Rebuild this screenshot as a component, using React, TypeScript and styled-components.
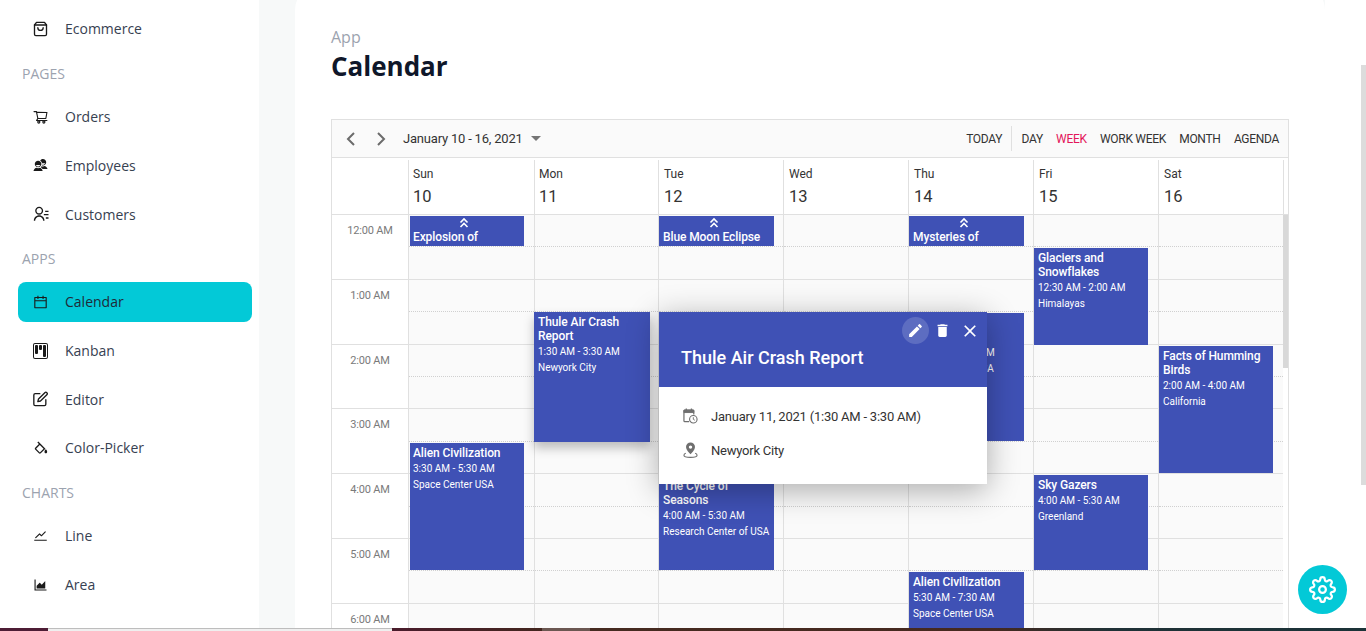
import * as React from "react"
import styled, { createGlobalStyle } from "styled-components"
import { FiShoppingBag, FiEdit, FiSettings } from "react-icons/fi"
import {
  AiOutlineShoppingCart,
  AiOutlineCalendar,
  AiOutlineStock,
  AiOutlineAreaChart,
} from "react-icons/ai"
import { IoMdContacts } from "react-icons/io"
import { RiContactsLine } from "react-icons/ri"
import { BsKanban } from "react-icons/bs"
import { BiColorFill } from "react-icons/bi"
import { MdEdit, MdDelete, MdClose } from "react-icons/md"

const INDIGO = "#3f51b5"
const LINE = "#e0e0e0"
const SLOT = 32.4

const GlobalStyle = createGlobalStyle`
  html, body {
    margin: 0;
    height: 100%;
    overflow: hidden;
    background: #fff;
  }
  * {
    box-sizing: border-box;
  }
`

const Shell = styled.div`
  display: flex;
  height: 100vh;
  overflow: hidden;
  font-family: "Open Sans", sans-serif;
`

const Sidebar = styled.aside`
  flex: 0 0 259px;
  padding: 8.4px 7px 0 18px;
  background: #fff;
`

const SectionTitle = styled.p`
  margin: 14.67px 0 12.67px 4px;
  height: 20px;
  font-size: 14px;
  line-height: 20px;
  color: #9ca3af;
`

const NavItem = styled.a<{ $active?: boolean }>`
  display: flex;
  align-items: center;
  gap: 16px;
  height: 40.67px;
  margin-bottom: 8px;
  padding-left: 14px;
  border-radius: 8px;
  font-size: 14px;
  color: ${(p) => (p.$active ? "#1f2937" : "#374151")};
  background: ${(p) => (p.$active ? "#03c9d7" : "transparent")};
  & svg {
    flex: 0 0 17px;
    width: 17px;
    height: 16px;
    color: #1a1a1a;
  }
`

const Main = styled.main`
  flex: 1;
  padding: 0 41px 0 36px;
  background: linear-gradient(to right, #f7f9f9 0, #f7f9f9 1066px, #fff 1066px);
`

const Card = styled.section`
  margin-top: -14px;
  padding: 39px 36px 0;
  height: calc(100vh + 14px);
  background: #fff;
  border-radius: 24px 24px 0 0;
  overflow: hidden;
`

const Breadcrumb = styled.p`
  margin: 0;
  height: 22px;
  font-size: 16px;
  line-height: 24px;
  color: #9ca3af;
`

const PageTitle = styled.h1`
  margin: 0 0 34px;
  height: 38px;
  font-size: 26px;
  line-height: 38px;
  font-weight: 700;
  color: #0f172a;
`

const Scheduler = styled.div`
  position: relative;
  height: 530px;
  border: 1px solid ${LINE};
  border-bottom: 0;
  font-family: Roboto, sans-serif;
  background: #fff;
`

const Toolbar = styled.div`
  display: flex;
  align-items: center;
  height: 38px;
  padding: 0 9px 0 11px;
  background: #fafafa;
  border-bottom: 1px solid ${LINE};
  font-size: 13px;
  color: #333;
`

const NavArrow = styled.button`
  display: flex;
  padding: 0;
  width: 16px;
  margin-right: 14px;
  border: 0;
  background: none;
  & svg {
    width: 16px;
    height: 18px;
    fill: none;
    stroke: #6b6b6b;
    stroke-width: 2;
  }
`

const DateRange = styled.span`
  font-size: 13px;
  letter-spacing: -0.2px;
`

const Caret = styled.i`
  margin-left: 8px;
  border-left: 5px solid transparent;
  border-right: 5px solid transparent;
  border-top: 5px solid #757575;
`

const ToolbarSpacer = styled.div`
  flex: 1;
`

const ViewButton = styled.span<{ $active?: boolean }>`
  margin-left: 13.3px;
  font-size: 12px;
  letter-spacing: -0.3px;
  color: ${(p) => (p.$active ? "#e3165b" : "#333")};
`

const ToolbarDivider = styled.i`
  width: 1px;
  height: 25px;
  margin: 0 -4px 0 9px;
  background: ${LINE};
`

const HeadRow = styled.div`
  display: grid;
  grid-template-columns: 76px 126px 124px repeat(5, 125px);
  height: 57px;
  padding-top: 2px;
  border-bottom: 1px solid ${LINE};
`

const HeadCell = styled.div`
  padding: 6px 0 0 5px;
  border-left: 1px solid ${LINE};
  color: #333;
  &:nth-child(-n + 3) {
    padding-left: 4px;
  }
  &:first-child {
    border-left: 0;
  }
  &:last-child {
    border-right: 1px solid ${LINE};
    width: 126px;
  }
`

const DayName = styled.div`
  font-size: 12px;
  line-height: 16px;
`

const DayNumber = styled.div`
  margin-top: 4px;
  font-size: 16.5px;
  line-height: 22px;
`

const Body = styled.div`
  position: relative;
  display: grid;
  grid-template-columns: 76px 126px 124px repeat(5, 125px);
  overflow: hidden;
`

const TimeColumn = styled.div`
  background: #fff;
`

const TimeCell = styled.div`
  height: ${SLOT * 2}px;
  padding-top: 9px;
  border-bottom: 1px solid ${LINE};
  font-size: 11px;
  letter-spacing: -0.2px;
  line-height: 14px;
  color: #7a7a7a;
  text-align: center;
`

const DayColumn = styled.div`
  position: relative;
  border-left: 1px solid ${LINE};
  background: #fafafa;
`

const Slot = styled.div<{ $half: boolean }>`
  height: ${SLOT}px;
  border-bottom: 1px ${(p) => (p.$half ? "dotted #d0d0d0" : `solid ${LINE}`)};
`

const EventBox = styled.div<{
  $top: number
  $height: number
  $left: number
  $width: number
  $inset: number
  $selected?: boolean
  $clipped?: boolean
}>`
  position: absolute;
  top: ${(p) => p.$top}px;
  left: ${(p) => p.$left}px;
  width: ${(p) => p.$width}px;
  height: ${(p) => p.$height}px;
  padding: ${(p) => (p.$clipped ? "0" : "3px")} 2px 0 ${(p) => p.$inset}px;
  overflow: hidden;
  background: ${INDIGO};
  color: #fff;
  box-shadow: ${(p) =>
    p.$selected ? "0 6px 10px rgba(0, 0, 0, 0.25)" : "none"};
`

const ChevronRow = styled.div`
  display: flex;
  justify-content: center;
  height: 14px;
  margin-right: 8px;
  & svg {
    width: 10px;
    height: 14px;
    fill: none;
    stroke: #fff;
    stroke-width: 1.6;
  }
`

const EventTitle = styled.div`
  font-size: 12px;
  font-weight: 500;
  letter-spacing: -0.1px;
  line-height: 14px;
`

const EventTime = styled.div`
  margin-top: 2px;
  font-size: 10px;
  line-height: 14px;
`

const EventPlace = styled.div`
  margin-top: 2px;
  font-size: 10px;
  line-height: 14px;
`

const InnerScrollThumb = styled.i`
  position: absolute;
  top: 0;
  right: 0;
  width: 5px;
  height: 153px;
  background: #d8d8d8;
`

const Popup = styled.div`
  position: absolute;
  left: 327px;
  top: 192px;
  width: 328px;
  height: 172px;
  background: #fff;
  box-shadow: 0 6px 30px rgba(0, 0, 0, 0.32);
`

const PopupHeader = styled.header`
  position: relative;
  height: 75px;
  padding: 35px 22px 0;
  background: ${INDIGO};
  color: #fff;
  font-size: 18px;
  font-weight: 500;
  line-height: 21px;
`

const PopupTools = styled.div`
  position: absolute;
  top: 5px;
  right: 4px;
  display: flex;
  align-items: center;
`

const PopupTool = styled.button<{ $focused?: boolean; $size: number }>`
  display: flex;
  align-items: center;
  justify-content: center;
  width: 27px;
  height: 27px;
  padding: 0;
  border: 0;
  border-radius: 50%;
  color: #fff;
  background: ${(p) => (p.$focused ? "rgba(255, 255, 255, 0.16)" : "none")};
  & svg {
    width: ${(p) => p.$size}px;
    height: ${(p) => p.$size}px;
  }
`

const PopupBody = styled.div`
  padding: 12px 0 0 24px;
`

const PopupRow = styled.div`
  display: flex;
  align-items: center;
  gap: 13px;
  height: 34px;
  font-size: 13px;
  letter-spacing: -0.22px;
  color: #333;
  & svg {
    flex: 0 0 15px;
    width: 15px;
    height: 16px;
  }
`

const SettingsButton = styled.button`
  position: fixed;
  left: 1298px;
  top: 565px;
  display: flex;
  align-items: center;
  justify-content: center;
  width: 49px;
  height: 49px;
  padding: 0;
  border: 0;
  border-radius: 50%;
  background: #03c9d7;
  color: #fff;
  & svg {
    width: 27px;
    height: 27px;
  }
`

const PageScrollThumb = styled.i`
  position: fixed;
  top: 65px;
  right: 0;
  width: 5px;
  height: 420px;
  background: #dcdcdc;
`

const BottomStrip = styled.div`
  position: fixed;
  left: 0;
  right: 0;
  bottom: 0;
  display: flex;
  height: 3px;
`

const StripTab = styled.i`
  flex: 0 0 48px;
  background: #4d1d35;
`

const StripBar = styled.i`
  flex: 0 0 344px;
  background: #efefef;
  border-top: 1px solid #bdbdbd;
`

const StripRest = styled.i`
  flex: 1;
  background: linear-gradient(
    to right,
    #4a1c2c 0,
    #43261f 150px,
    #6b5751 150px,
    #6b5751 198px,
    #452a20 198px,
    #46291f 600px,
    #1f3136 720px,
    #1b3338 100%
  );
`

type TEvent = {
  title: string
  time?: string
  place?: string
  top: number
  height: number
  left: number
  width: number
  inset?: number
  selected?: boolean
  clipped?: boolean
}

const NAV = [
  { title: "", items: [{ name: "Ecommerce", icon: <FiShoppingBag /> }] },
  {
    title: "PAGES",
    items: [
      { name: "Orders", icon: <AiOutlineShoppingCart /> },
      { name: "Employees", icon: <IoMdContacts /> },
      { name: "Customers", icon: <RiContactsLine /> },
    ],
  },
  {
    title: "APPS",
    items: [
      { name: "Calendar", icon: <AiOutlineCalendar /> },
      { name: "Kanban", icon: <BsKanban /> },
      { name: "Editor", icon: <FiEdit /> },
      { name: "Color-Picker", icon: <BiColorFill /> },
    ],
  },
  {
    title: "CHARTS",
    items: [
      { name: "Line", icon: <AiOutlineStock /> },
      { name: "Area", icon: <AiOutlineAreaChart /> },
    ],
  },
]

const HOURS = ["12:00 AM", "1:00 AM", "2:00 AM", "3:00 AM", "4:00 AM", "5:00 AM", "6:00 AM"]

const VIEWS = ["DAY", "WEEK", "WORK WEEK", "MONTH", "AGENDA"]

const DAYS: { name: string; date: number; events: TEvent[] }[] = [
  {
    name: "Sun",
    date: 10,
    events: [
      { title: "Explosion of", top: 1, height: 30, left: 1, width: 114, inset: 3, clipped: true },
      { title: "Alien Civilization", time: "3:30 AM - 5:30 AM", place: "Space Center USA", top: 228, height: 127, left: 1, width: 114, inset: 3 },
    ],
  },
  {
    name: "Mon",
    date: 11,
    events: [
      { title: "Thule Air Crash Report", time: "1:30 AM - 3:30 AM", place: "Newyork City", top: 97, height: 130, left: -1, width: 116, selected: true },
    ],
  },
  {
    name: "Tue",
    date: 12,
    events: [
      { title: "Blue Moon Eclipse", top: 1, height: 30, left: 0, width: 115, clipped: true },
      { title: "The Cycle of Seasons", time: "4:00 AM - 5:30 AM", place: "Research Center of USA", top: 261, height: 94, left: 0, width: 115 },
    ],
  },
  { name: "Wed", date: 13, events: [] },
  {
    name: "Thu",
    date: 14,
    events: [
      { title: "Mysteries of", top: 1, height: 30, left: 0, width: 115, clipped: true },
      { title: "Life on Mars Exhibition", time: "1:30 AM - 3:30 AM", place: "Space Center USA", top: 98, height: 128, left: 0, width: 115 },
      { title: "Alien Civilization", time: "5:30 AM - 7:30 AM", place: "Space Center USA", top: 357, height: 130, left: 0, width: 115 },
    ],
  },
  {
    name: "Fri",
    date: 15,
    events: [
      { title: "Glaciers and Snowflakes", time: "12:30 AM - 2:00 AM", place: "Himalayas", top: 33, height: 97, left: 0, width: 114 },
      { title: "Sky Gazers", time: "4:00 AM - 5:30 AM", place: "Greenland", top: 260, height: 95, left: 0, width: 114 },
    ],
  },
  {
    name: "Sat",
    date: 16,
    events: [
      { title: "Facts of Humming Birds", time: "2:00 AM - 4:00 AM", place: "California", top: 131, height: 127, left: 0, width: 114 },
    ],
  },
]

const CalendarClockIcon = () => (
  <svg viewBox="0 0 16 17" fill="none" stroke="#6f6f6f">
    <path d="M11.5 7V3.2a1 1 0 0 0-1-1H2a1 1 0 0 0-1 1v10.3a1 1 0 0 0 1 1h4.5" strokeWidth="1.3" />
    <path d="M1 2.2h10.5v2.6H1z" fill="#6f6f6f" strokeWidth="1" />
    <path d="M3.5 .5v2M9 .5v2" strokeWidth="1.4" />
    <circle cx="11" cy="12" r="4" strokeWidth="1.2" fill="#fff" />
    <path d="M11 9.8V12l1.6 1" strokeWidth="1" />
  </svg>
)

const PinIcon = () => (
  <svg viewBox="0 0 16 17">
    <path
      fillRule="evenodd"
      fill="#6f6f6f"
      d="M8 .5a4.8 4.8 0 0 1 4.8 4.8c0 3-3 5.6-4.8 7.7-1.8-2.1-4.8-4.7-4.8-7.7A4.8 4.8 0 0 1 8 .5zm0 3.1a1.8 1.8 0 1 0 0 3.6 1.8 1.8 0 0 0 0-3.6z"
    />
    <path d="M3 12c-1.4.5-2 1.2-2 2 0 1.4 3 2.3 7 2.3s7-.9 7-2.3c0-.8-.6-1.5-2-2" fill="none" stroke="#6f6f6f" strokeWidth="1.2" />
  </svg>
)

const EventCard = ({ event }: { event: TEvent }) => (
  <EventBox
    $top={event.top}
    $height={event.height}
    $left={event.left}
    $width={event.width}
    $inset={event.inset ?? 4}
    $selected={event.selected}
    $clipped={event.clipped}
  >
    {event.clipped && (
      <ChevronRow>
        <svg viewBox="0 0 10 14">
          <path d="M1.5 6.5L5 3l3.5 3.5M1.5 11L5 7.5 8.5 11" />
        </svg>
      </ChevronRow>
    )}
    <EventTitle>{event.title}</EventTitle>
    {event.time && <EventTime>{event.time}</EventTime>}
    {event.place && <EventPlace>{event.place}</EventPlace>}
  </EventBox>
)

export default function App() {
  return (
    <Shell>
      <GlobalStyle />
      <Sidebar>
        {NAV.map((group) => (
          <div key={group.title}>
            {group.title && <SectionTitle>{group.title}</SectionTitle>}
            {group.items.map((item) => (
              <NavItem key={item.name} $active={item.name === "Calendar"}>
                {item.icon}
                {item.name}
              </NavItem>
            ))}
          </div>
        ))}
      </Sidebar>
      <Main>
        <Card>
          <Breadcrumb>App</Breadcrumb>
          <PageTitle>Calendar</PageTitle>
          <Scheduler>
            <Toolbar>
              <NavArrow>
                <svg viewBox="0 0 16 18">
                  <path d="M11 3L5 9l6 6" />
                </svg>
              </NavArrow>
              <NavArrow>
                <svg viewBox="0 0 16 18">
                  <path d="M5 3l6 6-6 6" />
                </svg>
              </NavArrow>
              <DateRange>January 10 - 16, 2021</DateRange>
              <Caret />
              <ToolbarSpacer />
              <ViewButton>TODAY</ViewButton>
              <ToolbarDivider />
              {VIEWS.map((view) => (
                <ViewButton key={view} $active={view === "WEEK"}>
                  {view}
                </ViewButton>
              ))}
            </Toolbar>
            <HeadRow>
              <HeadCell />
              {DAYS.map((day) => (
                <HeadCell key={day.name}>
                  <DayName>{day.name}</DayName>
                  <DayNumber>{day.date}</DayNumber>
                </HeadCell>
              ))}
            </HeadRow>
            <Body>
              <TimeColumn>
                {HOURS.map((hour) => (
                  <TimeCell key={hour}>{hour}</TimeCell>
                ))}
              </TimeColumn>
              {DAYS.map((day) => (
                <DayColumn key={day.name}>
                  {HOURS.flatMap((hour) => [
                    <Slot key={hour + "a"} $half />,
                    <Slot key={hour + "b"} $half={false} />,
                  ])}
                  {day.events.map((event) => (
                    <EventCard key={event.title} event={event} />
                  ))}
                </DayColumn>
              ))}
              <InnerScrollThumb />
            </Body>
            <Popup>
              <PopupHeader>
                Thule Air Crash Report
                <PopupTools>
                  <PopupTool $focused $size={17}>
                    <MdEdit />
                  </PopupTool>
                  <PopupTool $size={17}>
                    <MdDelete />
                  </PopupTool>
                  <PopupTool $size={20}>
                    <MdClose />
                  </PopupTool>
                </PopupTools>
              </PopupHeader>
              <PopupBody>
                <PopupRow>
                  <CalendarClockIcon />
                  January 11, 2021 (1:30 AM - 3:30 AM)
                </PopupRow>
                <PopupRow>
                  <PinIcon />
                  Newyork City
                </PopupRow>
              </PopupBody>
            </Popup>
          </Scheduler>
        </Card>
      </Main>
      <SettingsButton>
        <FiSettings />
      </SettingsButton>
      <PageScrollThumb />
      <BottomStrip>
        <StripTab />
        <StripBar />
        <StripRest />
      </BottomStrip>
    </Shell>
  )
}
